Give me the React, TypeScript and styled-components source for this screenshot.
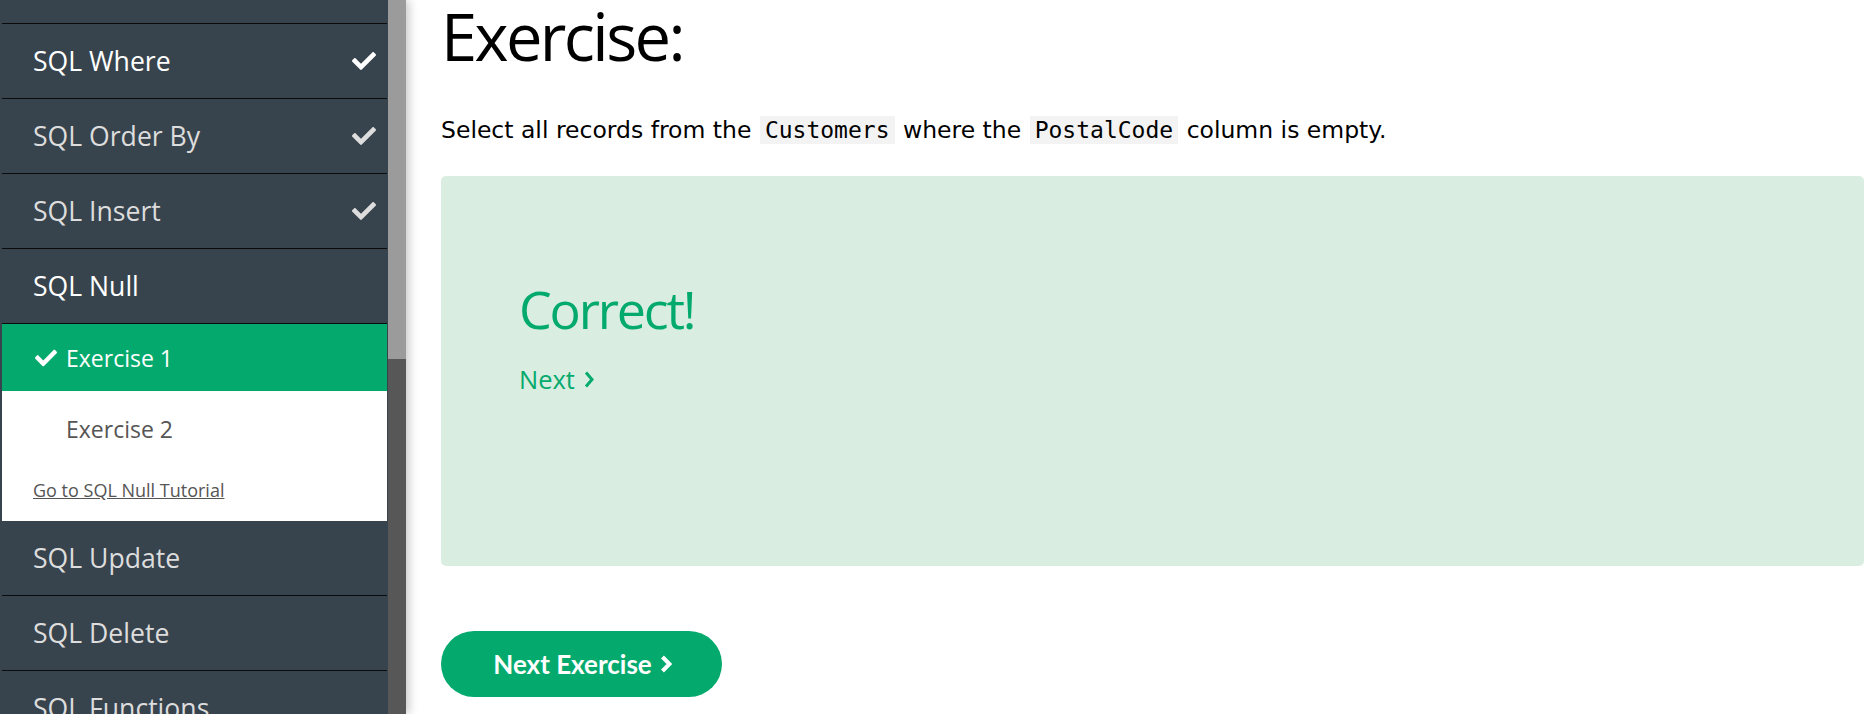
import React from "react";
import styled, { createGlobalStyle } from "styled-components";
import { FaCheck } from "react-icons/fa";

const GlobalStyle = createGlobalStyle`
  html, body { margin: 0; padding: 0; background: #ffffff; overflow: hidden; }
  #root { height: 714px; }
`;

const Page = styled.div`
  display: flex;
  height: 714px;
  width: 1876px;
  overflow: hidden;
`;

const SideWrap = styled.aside`
  display: flex;
  flex: 0 0 406px;
  height: 714px;
  position: relative;
  z-index: 1;
  box-shadow: 3px 0 9px rgba(0, 0, 0, 0.22);
`;

const Nav = styled.nav`
  flex: 0 0 388px;
  box-sizing: border-box;
  padding: 0 1px 0 2px;
  background: #38444d;
  overflow: hidden;
`;

const List = styled.div`
  margin-top: -51px;
  display: flex;
  flex-direction: column;
`;

const TopicRow = styled.div<{ $bright?: boolean }>`
  height: 74px;
  flex: 0 0 74px;
  border-bottom: 1px solid #0b0b0b;
  display: flex;
  align-items: center;
  justify-content: space-between;
  padding: 0 11px 0 31px;
  font-family: "Open Sans", "Noto Sans", sans-serif;
  font-size: 26.6px;
  color: ${(p) => (p.$bright ? "#ffffff" : "#dddddd")};
`;

const CheckMark = styled.span<{ $bright?: boolean }>`
  display: flex;
  color: ${(p) => (p.$bright ? "#ffffff" : "#dddddd")};
`;

const ActiveRow = styled.div`
  height: 67px;
  flex: 0 0 67px;
  background: #04aa6d;
  display: flex;
  align-items: center;
  gap: 9px;
  padding-left: 33px;
  font-family: "Open Sans", "Noto Sans", sans-serif;
  font-size: 23px;
  color: #ffffff;
`;

const SubBlock = styled.div`
  height: 130px;
  flex: 0 0 130px;
  background: #ffffff;
  display: flex;
  flex-direction: column;
`;

const SubRow = styled.div`
  height: 67px;
  margin-top: 4px;
  display: flex;
  align-items: center;
  padding-left: 64px;
  font-family: "Open Sans", "Noto Sans", sans-serif;
  font-size: 23px;
  color: #555555;
`;

const TutorialLink = styled.a`
  margin-top: 16px;
  padding-left: 31px;
  font-family: "Open Sans", "Noto Sans", sans-serif;
  font-size: 18px;
  line-height: 25px;
  color: #555555;
  text-decoration: underline;
`;

const ScrollTrack = styled.div`
  flex: 0 0 18px;
  background: #575757;
  display: flex;
  flex-direction: column;
`;

const ScrollThumb = styled.div`
  height: 359px;
  background: #9b9b9b;
`;

const Main = styled.main`
  flex: 1;
  box-sizing: border-box;
  padding: 0 12px 0 35px;
  display: flex;
  flex-direction: column;
  align-items: flex-start;
`;

const Heading = styled.h1`
  margin: 4px 0 0;
  font-family: "Open Sans", "Noto Sans", sans-serif;
  font-weight: 400;
  font-size: 65px;
  line-height: 65px;
  letter-spacing: -2.6px;
  color: #000000;
`;

const Prompt = styled.p`
  margin: 47px 0 0;
  font-family: "DejaVu Sans", Verdana, sans-serif;
  font-size: 23.5px;
  line-height: 29px;
  color: #000000;
`;

const Code = styled.code`
  font-family: "DejaVu Sans Mono", "Liberation Mono", monospace;
  font-size: 23px;
  background: #f3f3f3;
  padding: 1px 5px;
  margin: 0 1px;
`;

const ResultPanel = styled.section`
  margin-top: 31px;
  align-self: stretch;
  height: 390px;
  box-sizing: border-box;
  padding: 107px 0 0 78px;
  background: #d9eee1;
  border-radius: 5px;
  display: flex;
  flex-direction: column;
  align-items: flex-start;
`;

const Correct = styled.div`
  font-family: "Open Sans", "Noto Sans", sans-serif;
  font-size: 52px;
  line-height: 52px;
  letter-spacing: -2.2px;
  color: #04aa6d;
`;

const NextLink = styled.a`
  margin-top: 31px;
  display: flex;
  align-items: center;
  gap: 9px;
  font-family: "Open Sans", "Noto Sans", sans-serif;
  font-size: 25.5px;
  line-height: 26px;
  color: #04aa6d;
  text-decoration: none;
`;

const NextButton = styled.button`
  margin-top: 65px;
  width: 281px;
  height: 66px;
  border: none;
  border-radius: 33px;
  background: #04aa6d;
  color: #ffffff;
  display: flex;
  align-items: center;
  justify-content: center;
  gap: 8px;
  padding: 0 0 0 2px;
  font-family: Lato, "Open Sans", sans-serif;
  font-weight: 700;
  font-size: 26px;
  cursor: pointer;
`;

const Chevron = ({ w, h, sw }: { w: number; h: number; sw: number }) => (
  <svg width={w} height={h} viewBox={`0 0 ${w} ${h}`} fill="none">
    <polyline
      points={`${sw / 2 + 0.5},${sw / 2} ${w - sw / 2 - 0.5},${h / 2} ${sw / 2 + 0.5},${h - sw / 2}`}
      stroke="currentColor"
      strokeWidth={sw}
      strokeLinejoin="miter"
    />
  </svg>
);

const topicsBefore = [
  { name: "SQL Where", done: true, bright: true },
  { name: "SQL Order By", done: true, bright: false },
  { name: "SQL Insert", done: true, bright: false },
  { name: "SQL Null", done: false, bright: true },
];

const topicsAfter = ["SQL Update", "SQL Delete", "SQL Functions"];

export default function App() {
  return (
    <>
      <GlobalStyle />
      <Page>
        <SideWrap>
          <Nav>
            <List>
              <TopicRow aria-hidden="true" />
              {topicsBefore.map((t) => (
                <TopicRow key={t.name} $bright={t.bright}>
                  <span>{t.name}</span>
                  {t.done && (
                    <CheckMark $bright={t.bright}>
                      <FaCheck size={24} />
                    </CheckMark>
                  )}
                </TopicRow>
              ))}
              <ActiveRow>
                <FaCheck size={22} />
                <span>Exercise 1</span>
              </ActiveRow>
              <SubBlock>
                <SubRow>Exercise 2</SubRow>
                <TutorialLink href="#">Go to SQL Null Tutorial</TutorialLink>
              </SubBlock>
              {topicsAfter.map((name) => (
                <TopicRow key={name}>
                  <span>{name}</span>
                </TopicRow>
              ))}
            </List>
          </Nav>
          <ScrollTrack>
            <ScrollThumb />
          </ScrollTrack>
        </SideWrap>
        <Main>
          <Heading>Exercise:</Heading>
          <Prompt>
            Select all records from the <Code>Customers</Code> where the{" "}
            <Code>PostalCode</Code> column is empty.
          </Prompt>
          <ResultPanel>
            <Correct>Correct!</Correct>
            <NextLink href="#">
              Next
              <Chevron w={10} h={17} sw={3} />
            </NextLink>
          </ResultPanel>
          <NextButton>
            Next Exercise
            <Chevron w={12} h={18} sw={4} />
          </NextButton>
        </Main>
      </Page>
    </>
  );
}
